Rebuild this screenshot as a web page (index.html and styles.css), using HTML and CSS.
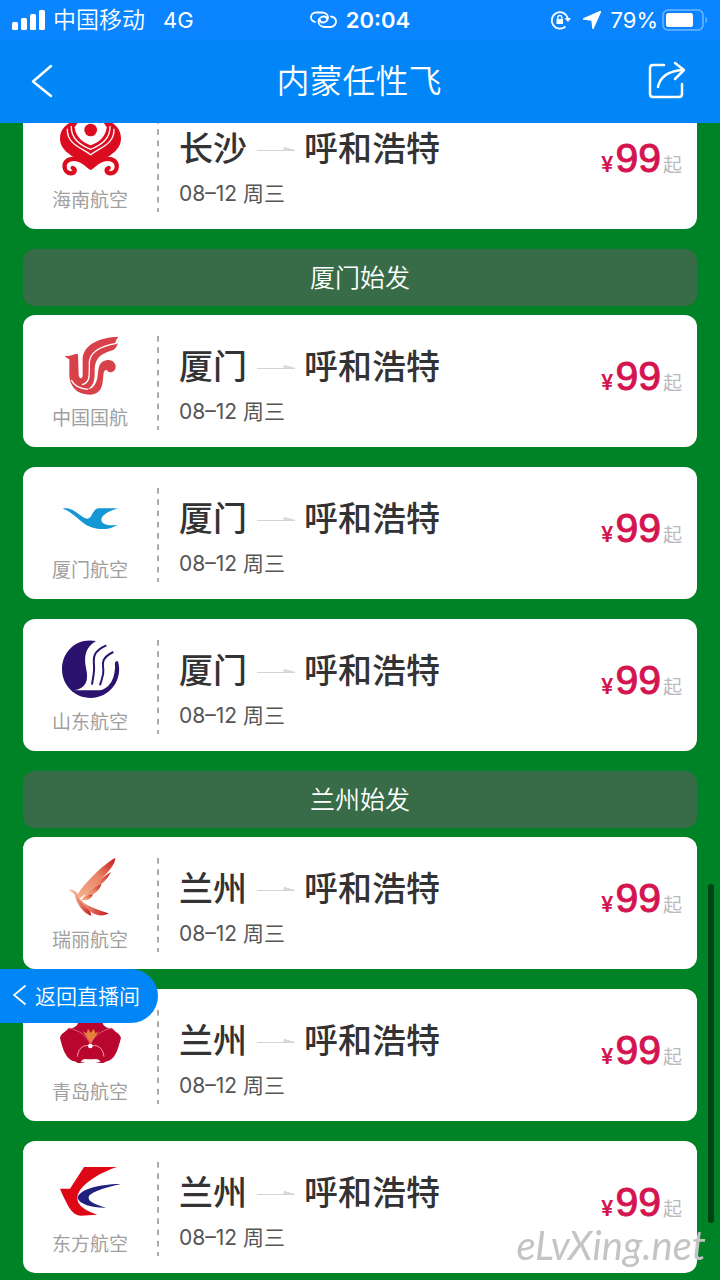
FILE: index.html
```html
<!DOCTYPE html>
<html lang="zh-CN">
<head>
    <meta charset="UTF-8">
    <meta name="viewport" content="width=device-width, initial-scale=1.0">
    <title>内蒙任性飞</title>
    <link rel="stylesheet" href="styles.css">
</head>
<body>
    <svg class="defs" aria-hidden="true">
        <symbol id="arrow" viewBox="0 0 38 8">
            <path d="M0 5.500h38L27 2.500v3" fill="#ddd" stroke="#d4d4d4" stroke-width="1"/>
        </symbol>
    </svg>

    <header class="header">
        <div class="status">
            <div class="status-left">
                <svg width="33" height="20" viewBox="0 0 33 20" fill="#fff">
                    <rect x="0" y="12" width="6" height="8" rx="1.500"/>
                    <rect x="9" y="8" width="6" height="12" rx="1.500"/>
                    <rect x="18" y="4" width="6" height="16" rx="1.500"/>
                    <rect x="27" y="0" width="6" height="20" rx="1.500"/>
                </svg>
                <span class="carrier">中国移动</span>
                <span>4G</span>
            </div>
            <div class="status-time">
                <svg width="27" height="18" viewBox="0 0 27 18" fill="none" stroke="#fff" stroke-width="1.800" stroke-linecap="round">
                    <path d="M5 11C2 10 1 8 1 6.500C1 3.500 3 1.500 6 1.500h6c3.500 0 6 2 6 5s-2.500 5-5 5c-2 0-3-1-3-2.500"/>
                    <path d="M21 5.500c3 .5 5 2.500 5 5s-2 5.500-5 5.500h-6c-4 0-6.500-2.500-6.500-5.500S11 5.500 14 5.500c2 0 3 1 3 2.500"/>
                </svg>
                <span>20:04</span>
            </div>
            <div class="status-right">
                <svg width="21" height="20" viewBox="0 0 21 20" fill="none" stroke="#fff" stroke-width="1.800">
                    <path d="M15.500 16.500A8.200 8.200 0 1 1 17.800 8"/>
                    <path d="M14.500 8h6.500l-3 4z" fill="#fff" stroke="none"/>
                    <path d="M6.500 9h6.500v5h-6.500z" fill="#fff" stroke="none"/>
                    <path d="M7.800 9V7.500a2 2 0 0 1 4 0V9" stroke-width="1.300"/>
                </svg>
                <svg class="locate" width="18" height="18" viewBox="0 0 18 18" fill="#fff">
                    <path d="M17.500 0.500L10 17.500L9 9L0.500 8z" stroke="#fff" stroke-width="1.500" stroke-linejoin="round"/>
                </svg>
                <span>79%</span>
                <svg width="46" height="22" viewBox="0 0 46 22">
                    <rect x="1" y="1" width="40" height="20" rx="5" fill="none" stroke="#6db6ff" stroke-width="1.500"/>
                    <rect x="4" y="4" width="27" height="14" rx="2.500" fill="#fff"/>
                    <path d="M43.500 7.500c2 1 2 6 0 7z" fill="#6db6ff"/>
                </svg>
            </div>
        </div>
        <div class="navbar">
            <button class="nav-button" aria-label="返回">
                <svg width="40" height="40" viewBox="0 0 40 40" fill="none" stroke="#fff" stroke-width="2.500" stroke-linecap="round" stroke-linejoin="round">
                    <path d="M21 5L3 20.500L21 35"/>
                </svg>
            </button>
            <h1>内蒙任性飞</h1>
            <button class="nav-button" aria-label="分享">
                <svg width="40" height="40" viewBox="0 0 40 40" fill="none" stroke="#fff" stroke-width="2.500" stroke-linecap="round" stroke-linejoin="round">
                    <path d="M16 4H5Q2 4 2 7V33Q2 36 5 36H31Q34 36 34 33V23"/>
                    <path d="M10 26C12 16 19 10 35 9"/>
                    <path d="M27 2L36 9L27 18"/>
                </svg>
            </button>
        </div>
    </header>

    <main class="list">
        <section class="group">
            <article class="card">
                <div class="airline">
                    <svg class="logo" viewBox="0 0 180 180">
                        <path d="M92 156C76 126 0 112 0 62C0 34 20 16 40 10L145 10C165 16 183 34 183 62C183 112 108 126 92 156Z" fill="#dc0c20"/>
                        <path d="M92 82C66 74 46 54 44 28L60 4H124L140 28C138 54 118 74 92 82Z" fill="#fff"/>
                        <g fill="none" stroke="#fff" stroke-width="4">
                            <path d="M34 24C32 62 60 80 92 94C124 80 152 62 150 24"/>
                            <path d="M22 32C20 78 62 88 92 110C122 88 164 78 162 32"/>
                        </g>
                        <circle cx="92" cy="36" r="19" fill="#dc0c20"/>
                        <g fill="none" stroke="#dc0c20" stroke-width="13" stroke-linecap="round">
                            <path d="M90 148C74 132 50 118 30 124C6 132 10 164 32 166C46 166 48 152 38 150"/>
                            <path d="M94 148C110 132 134 118 154 124C178 132 174 164 152 166C138 166 136 152 146 150"/>
                        </g>
                    </svg>
                    <span>海南航空</span>
                </div>
                <div class="info">
                    <h2>长沙<svg class="arrow"><use href="#arrow"/></svg>呼和浩特</h2>
                    <p>08–12 周三</p>
                </div>
                <div class="price"><small>¥</small><strong>99</strong><span>起</span></div>
            </article>
        </section>

        <section class="group">
            <h3>厦门始发</h3>
            <article class="card">
                <div class="airline">
                    <svg class="logo" viewBox="0 0 180 180">
                        <path d="M175 2C120 4 68 26 68 70V116C68 130 58 130 56 116L54 54C38 54 32 62 14 60C20 66 24 68 28 70L28 116C28 150 50 176 92 176C124 174 128 150 130 118C131 102 138 100 142 104C150 114 168 108 167 90C164 70 138 66 124 80C114 90 116 104 112 126C108 146 98 158 84 160C100 148 104 136 104 108C104 66 120 54 160 42C168 36 172 30 173 22C166 24 162 20 175 2Z" fill="#d9414a"/>
                        <g fill="none" stroke="#fff" stroke-width="4">
                            <path d="M170 22C110 32 88 52 88 82C88 122 90 140 66 146"/>
                            <path d="M34 132C42 150 58 158 84 160"/>
                        </g>
                    </svg>
                    <span>中国国航</span>
                </div>
                <div class="info">
                    <h2>厦门<svg class="arrow"><use href="#arrow"/></svg>呼和浩特</h2>
                    <p>08–12 周三</p>
                </div>
                <div class="price"><small>¥</small><strong>99</strong><span>起</span></div>
            </article>
            <article class="card">
                <div class="airline">
                    <svg class="logo" viewBox="0 0 180 180">
                        <path d="M8 62C42 54 64 94 84 92C98 88 96 66 114 61L174 61C144 70 124 82 124 96C126 112 150 114 173 110C150 126 116 126 94 118C58 104 42 72 8 62Z" fill="#1497d5"/>
                    </svg>
                    <span>厦门航空</span>
                </div>
                <div class="info">
                    <h2>厦门<svg class="arrow"><use href="#arrow"/></svg>呼和浩特</h2>
                    <p>08–12 周三</p>
                </div>
                <div class="price"><small>¥</small><strong>99</strong><span>起</span></div>
            </article>
            <article class="card">
                <div class="airline">
                    <svg class="logo" viewBox="0 0 180 180">
                        <path d="M108 3C48-8 6 36 6 88C6 136 44 174 92 174C150 174 190 118 174 64C166 62 164 66 165 76C166 112 150 148 118 151H42C76 146 88 124 78 84C70 44 80 20 108 3Z" fill="#2b126f"/>
                        <g fill="none" stroke="#2b126f" stroke-width="6">
                            <path d="M139 16C98 34 100 54 102 76C104 98 98 116 96 134"/>
                            <path d="M160 36C122 54 128 72 130 88C132 108 124 118 120 136"/>
                        </g>
                    </svg>
                    <span>山东航空</span>
                </div>
                <div class="info">
                    <h2>厦门<svg class="arrow"><use href="#arrow"/></svg>呼和浩特</h2>
                    <p>08–12 周三</p>
                </div>
                <div class="price"><small>¥</small><strong>99</strong><span>起</span></div>
            </article>
        </section>

        <section class="group">
            <h3>兰州始发</h3>
            <article class="card">
                <div class="airline">
                    <svg class="logo" viewBox="0 0 180 180">
                        <defs>
                            <linearGradient id="wing" x1="0" y1="1" x2="1" y2="0">
                                <stop offset="0" stop-color="#f6b795"/>
                                <stop offset="0.600" stop-color="#e98464"/>
                                <stop offset="1" stop-color="#c8141c"/>
                            </linearGradient>
                            <linearGradient id="tail">
                                <stop offset="0" stop-color="#f2ad8c"/>
                                <stop offset="1" stop-color="#c8141c"/>
                            </linearGradient>
                        </defs>
                        <g fill="url(#wing)">
                            <path d="M166 0C142 10 78 68 54 108C44 98 36 94 26 96C44 104 46 118 62 120C96 86 164 36 166 0Z"/>
                            <path d="M152 42C124 62 90 88 62 116C98 104 142 70 152 42Z"/>
                            <path d="M124 78C104 88 82 102 66 122C94 118 120 98 124 78Z"/>
                            <path d="M98 110C84 110 72 116 64 126C82 130 94 122 98 110Z"/>
                        </g>
                        <g fill="url(#tail)">
                            <path d="M44 106C46 136 70 166 94 174C92 152 70 136 44 106Z"/>
                            <path d="M54 118C72 140 90 148 146 166C126 180 86 174 54 118Z"/>
                        </g>
                    </svg>
                    <span>瑞丽航空</span>
                </div>
                <div class="info">
                    <h2>兰州<svg class="arrow"><use href="#arrow"/></svg>呼和浩特</h2>
                    <p>08–12 周三</p>
                </div>
                <div class="price"><small>¥</small><strong>99</strong><span>起</span></div>
            </article>
            <article class="card">
                <div class="airline">
                    <svg class="logo" viewBox="0 0 180 180">
                        <g fill="#b9062f">
                            <path d="M28 62C36 50 48 56 54 40C72 20 110 20 128 40C134 56 146 50 154 62L92 118Z"/>
                            <path d="M26 54C18 66 2 70 0 84C6 108 16 150 44 154C60 166 70 154 92 154C112 154 122 166 140 154C168 150 176 108 183 84C180 70 164 66 156 54C128 58 104 78 92 104C80 78 54 58 26 54Z"/>
                        </g>
                        <path d="M68 64L80 70L84 56L92 68L102 56L106 70L116 64L92 100Z" fill="#e5803c"/>
                        <path d="M26 54C56 60 84 78 91 106C98 78 128 60 156 54" fill="none" stroke="#e58a9b" stroke-width="2"/>
                        <path d="M52 140C56 108 76 104 91 108C108 104 128 108 132 140" fill="none" stroke="#eda3b2" stroke-width="3"/>
                        <path d="M62 156C70 142 80 148 92 148C104 148 114 142 122 156Z" fill="#fff"/>
                        <circle cx="91" cy="108" r="7" fill="#fff"/>
                    </svg>
                    <span>青岛航空</span>
                </div>
                <div class="info">
                    <h2>兰州<svg class="arrow"><use href="#arrow"/></svg>呼和浩特</h2>
                    <p>08–12 周三</p>
                </div>
                <div class="price"><small>¥</small><strong>99</strong><span>起</span></div>
            </article>
            <article class="card">
                <div class="airline">
                    <svg class="logo" viewBox="0 0 180 180">
                        <path d="M72 15H171C110 36 54 72 52 108C52 132 80 148 112 158L62 161C40 158 28 146 0 80H30Z" fill="#de0715"/>
                        <path d="M182 66C110 66 54 86 53 108C58 128 100 138 138 137C104 128 84 118 86 106C88 90 140 76 182 66Z" fill="#20207f"/>
                    </svg>
                    <span>东方航空</span>
                </div>
                <div class="info">
                    <h2>兰州<svg class="arrow"><use href="#arrow"/></svg>呼和浩特</h2>
                    <p>08–12 周三</p>
                </div>
                <div class="price"><small>¥</small><strong>99</strong><span>起</span></div>
            </article>
        </section>
    </main>

    <button class="live-back">
        <svg width="14" height="22" viewBox="0 0 14 22" fill="none" stroke="#fff" stroke-width="1.800" stroke-linecap="round">
            <path d="M12 2L1 11L12 20"/>
        </svg>
        返回直播间
    </button>
    <div class="scroll-thumb"></div>
    <div class="watermark">eLvXing.net</div>
</body>
</html>
```
FILE: styles.css
```css
* { box-sizing: border-box; }
body { margin: 0; min-height: 100vh; background: #008226; font-family: Inter, "Noto Sans CJK SC", sans-serif; overflow-x: hidden; }
h1, h2, h3, p { margin: 0; }
button { padding: 0; border: none; background: none; color: #fff; font-family: inherit; cursor: pointer; }
svg { display: block; flex: none; }
.defs { position: absolute; width: 0; height: 0; }

.header { position: sticky; top: 0; z-index: 2; background: #0086f6; color: #fff; }
.status { display: grid; grid-template-columns: 1fr auto 1fr; align-items: center; height: 39px; padding: 0 12px; background: #0a84ff; font-size: 22px; line-height: 40px; }
.status-left, .status-time, .status-right { display: flex; align-items: center; }
.status-left { gap: 8px; }
.carrier { font-size: 23px; font-weight: 350; margin-right: 10px; }
.status-time { gap: 9px; font-weight: 600; }
.status-right { justify-content: flex-end; gap: 4px; }
.locate { margin: 0 6px 0 8px; }
.navbar { display: flex; align-items: center; justify-content: space-between; height: 84px; padding: 0 32px 0 30px; }
.navbar h1 { font-size: 33px; font-weight: 350; line-height: 48px; }

.list { padding: 0 23px 7px; margin-top: -26px; }
.group { display: flex; flex-direction: column; gap: 20px; margin-bottom: 20px; }
.group:last-child { margin-bottom: 0; }
.group h3 { height: 57px; margin-bottom: -11px; padding-top: 1px; border-radius: 12px; background: #386c48; color: #fff; font-size: 25px; font-weight: 350; line-height: 57px; text-align: center; }

.card { display: flex; height: 132px; padding: 21px 15px 17px 0; border-radius: 12px; background: #fff; }
.airline { display: flex; flex-direction: column; align-items: center; gap: 10px; width: 134px; color: #a0a0a0; font-size: 19px; line-height: 26px; }
.logo { width: 60px; height: 60px; overflow: visible; }
.info { flex: 1; padding: 9px 0 0 22px; background: linear-gradient(#aaa 50%, transparent 50%) 0 0 / 2px 12% repeat-y; }
.info h2 { display: flex; align-items: center; color: #333; font-size: 34px; font-weight: 500; line-height: 44px; }
.arrow { width: 38px; height: 8px; margin: 0 9px 0 10px; }
.info p { margin-top: 8px; color: #555; font-size: 21px; line-height: 30px; word-spacing: normal; }
.price { display: flex; align-items: baseline; gap: 2px; padding-top: 16px; color: #d41450; }
.price small { font-size: 22px; font-weight: 600; }
.price strong { font-family: "Liberation Sans", sans-serif; font-size: 41px; font-weight: 400; line-height: 48px; -webkit-text-stroke: 1px #d41450; }
.price span { color: #bbb; font-size: 19px; }

.live-back { position: fixed; left: 0; bottom: 257px; z-index: 1; display: flex; align-items: center; gap: 8px; height: 54px; padding: 0 18px 2px 13px; border-radius: 0 27px 27px 0; background: #0086f6; font-size: 21px; font-weight: 350; }
.scroll-thumb { position: fixed; right: 6px; bottom: 57px; width: 6px; height: 339px; border-radius: 3px; background: rgba(0, 40, 10, 0.7); }
.watermark { position: fixed; right: 14px; bottom: 12px; color: #c4c4c4; font-family: Lato, sans-serif; font-size: 40px; font-style: italic; line-height: 46px; }
```
